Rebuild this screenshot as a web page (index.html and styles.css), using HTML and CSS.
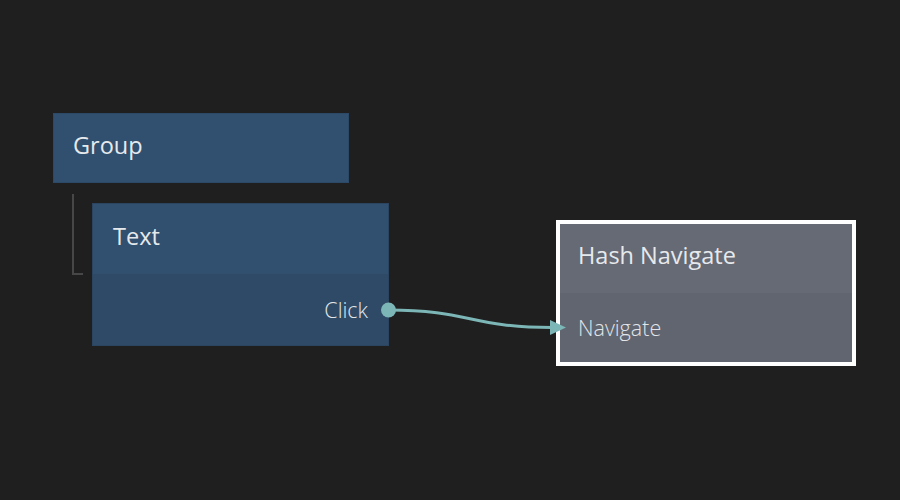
FILE: index.html
```html
<!DOCTYPE html>
<html>
<head>
<meta charset="utf-8">
<link rel="stylesheet" href="styles.css">
</head>
<body>
<div class="canvas">
  <div class="node node-group">
    <div class="node-head">Group</div>
  </div>
  <div class="tree-line"></div>
  <div class="node node-text">
    <div class="node-head">Text</div>
    <div class="node-ports ports-out"><span class="port-label">Click</span></div>
  </div>
  <div class="node node-hash">
    <div class="node-head">Hash Navigate</div>
    <div class="node-ports ports-in"><span class="port-label">Navigate</span></div>
  </div>
  <svg class="wires" width="900" height="500" viewBox="0 0 900 500">
    <path d="M388 310 C470 310 470 327.5 552 327.5" fill="none" stroke="#7db6b6" stroke-width="3"/>
    <circle cx="388.5" cy="310" r="7.5" fill="#7db6b6"/>
    <polygon points="550,320 566,327.5 550,335" fill="#7db6b6"/>
  </svg>
</div>
</body>
</html>
```
FILE: styles.css
```css
html, body {
  margin: 0;
  padding: 0;
  background: #1f1f1f;
}
.canvas {
  position: relative;
  width: 900px;
  height: 500px;
  overflow: hidden;
  font-family: "Open Sans", "Noto Sans", sans-serif;
  color: #e6e9ec;
}
.node {
  position: absolute;
  box-sizing: border-box;
  display: flex;
  flex-direction: column;
}
.node-head {
  height: 70px;
  display: flex;
  align-items: center;
  padding-left: 20px;
  font-size: 23.5px;
  box-sizing: border-box;
  padding-bottom: 6px;
}
.node-ports {
  flex: 1;
  display: flex;
  align-items: center;
  font-family: "Open Sans Light", "Open Sans", "Noto Sans", sans-serif;
  font-size: 21.5px;
  font-weight: 300;
  color: #e2e6ea;
}
.node-group {
  left: 53px;
  top: 113px;
  width: 296px;
  height: 70px;
  background: #315070;
  border: 1px solid #2d4968;
}
.node-group .node-head { height: 68px; padding-left: 19px; }
.node-text {
  left: 92px;
  top: 203px;
  width: 297px;
  height: 143px;
  background: #2e4a66;
  border: 1px solid #2b4560;
}
.node-text .node-head {
  background: #315070;
  height: 70px;
  padding-left: 20px;
}
.ports-out {
  justify-content: flex-end;
  padding-right: 20px;
  padding-bottom: 0;
}
.node-hash {
  left: 556px;
  top: 220px;
  width: 300px;
  height: 146px;
  border: 4px solid #ffffff;
  background: #61656f;
}
.node-hash .node-head {
  background: #666a75;
  height: 69px;
  padding-left: 18px;
  padding-bottom: 8px;
}
.ports-in {
  padding-left: 18px;
  padding-bottom: 0;
}
.tree-line {
  position: absolute;
  left: 72px;
  top: 194px;
  width: 11px;
  height: 81px;
  box-sizing: border-box;
  border-left: 2px solid #474747;
  border-bottom: 2px solid #474747;
}
.wires {
  position: absolute;
  left: 0;
  top: 0;
}
```
